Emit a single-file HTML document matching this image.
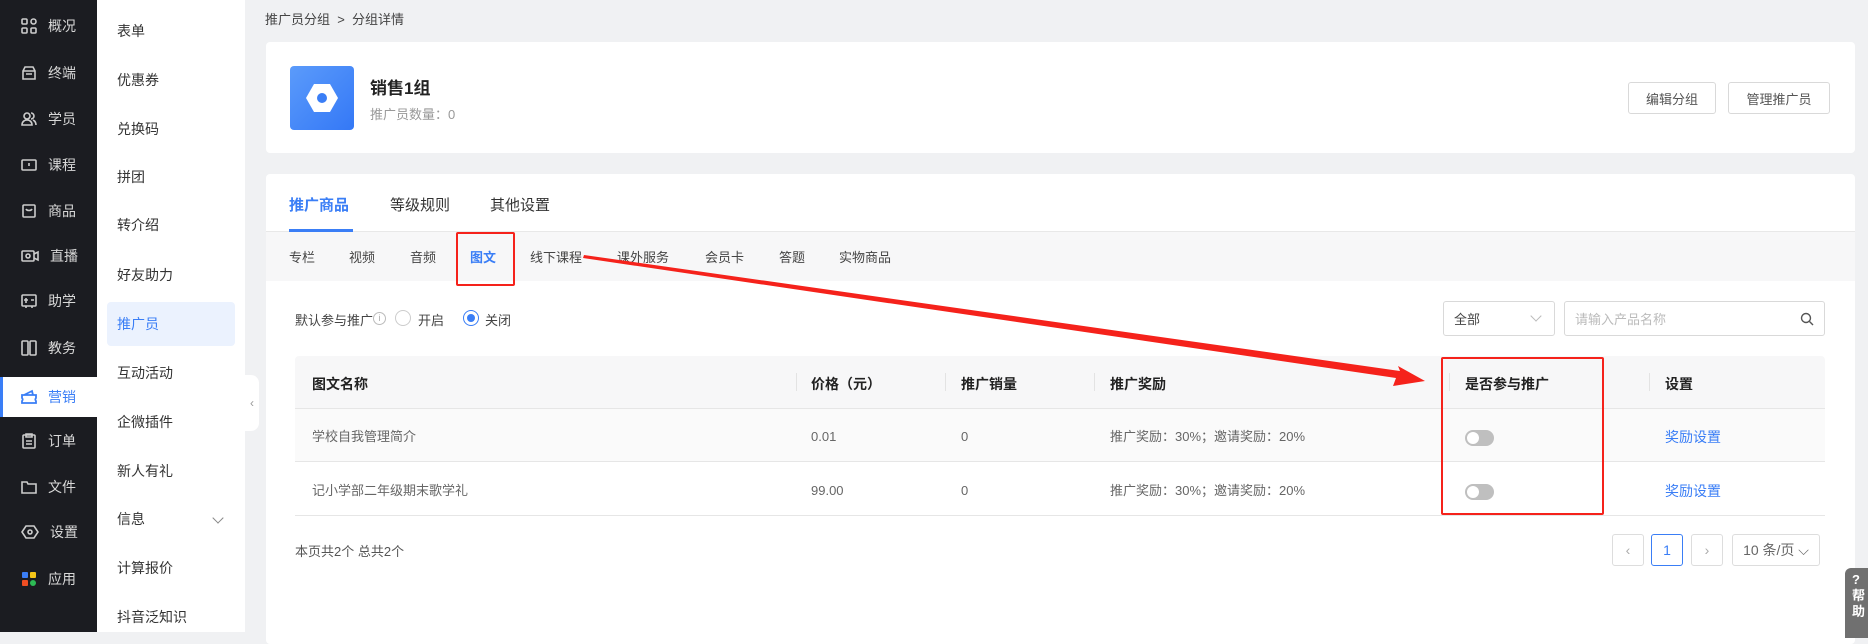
<!DOCTYPE html>
<html><head><meta charset="utf-8"><style>
*{box-sizing:border-box;margin:0;padding:0}
body{width:1868px;height:632px;overflow:hidden;background:#f0f1f3;font-family:"Liberation Sans","Noto Sans CJK SC",sans-serif;font-size:14px;color:#333;position:relative}
.abs{position:absolute}
.side{left:0;top:0;width:97px;height:632px;background:#1b1c21}
.si{position:absolute;left:0;width:97px;height:40px;display:flex;align-items:center;color:#d8d8d8;font-size:14px}
.si svg{margin-left:21px;margin-right:11px}
.sel{background:#fff;color:#3a7ef6}
.menu2{left:97px;top:0;width:148px;height:632px;background:#fff}
.m2{position:absolute;left:20px;font-size:14px;color:#333;line-height:20px}
.card{background:#fff;border-radius:4px}
.btn{position:absolute;border:1px solid #d9d9d9;border-radius:3px;background:#fff;font-size:13px;color:#555;display:flex;align-items:center;justify-content:center}
.th{position:absolute;font-weight:bold;color:#222;font-size:14px}
.td{position:absolute;color:#666;font-size:13px;line-height:20px;height:20px;display:flex;align-items:center}
.sep{position:absolute;width:1px;height:18px;background:#e3e3e3;top:373px}
.tog{position:absolute;width:29px;height:16px;border-radius:8px;background:#bfbfbf}
.tog:after{content:"";position:absolute;left:2px;top:2px;width:12px;height:12px;border-radius:50%;background:#fff}
.link{position:absolute;color:#3a7ef6;font-size:14px}
.pg{position:absolute;top:534px;height:32px;border:1px solid #ddd;border-radius:3px;display:flex;align-items:center;justify-content:center;color:#aaa;font-size:14px;background:#fff}
</style></head><body>
<div class="abs side"></div>
<div class="si" style="top:6px"><svg width="16" height="16" viewBox="0 0 16 16" fill="none" stroke="#ccc" stroke-width="1.6"><rect x="1" y="1" width="5" height="5" rx="1"/><rect x="10" y="1" width="5" height="5" rx="2.5"/><rect x="1" y="10" width="5" height="5" rx="1"/><rect x="10" y="10" width="5" height="5" rx="1"/></svg>概况</div>
<div class="si" style="top:53px"><svg width="16" height="16" viewBox="0 0 16 16" fill="none" stroke="#ccc" stroke-width="1.6"><path d="M2 6l2-4h8l2 4v8H2z M2 6h12 M5 9h6"/></svg>终端</div>
<div class="si" style="top:99px"><svg width="16" height="16" viewBox="0 0 16 16" fill="none" stroke="#ccc" stroke-width="1.6"><circle cx="6" cy="5" r="3"/><path d="M1 14c0-3 2-5 5-5s5 2 5 5z M10 2a3 3 0 010 6 M12 9c2 1 3 3 3 5"/></svg>学员</div>
<div class="si" style="top:145px"><svg width="16" height="16" viewBox="0 0 16 16" fill="none" stroke="#ccc" stroke-width="1.6"><rect x="1" y="3" width="14" height="10" rx="1"/><path d="M8 6v3"/></svg>课程</div>
<div class="si" style="top:191px"><svg width="16" height="16" viewBox="0 0 16 16" fill="none" stroke="#ccc" stroke-width="1.6"><rect x="2" y="2" width="12" height="12" rx="1"/><path d="M5 6c1 2 5 2 6 0"/></svg>商品</div>
<div class="si" style="top:236px"><svg width="18" height="16" viewBox="0 0 18 16" fill="none" stroke="#ccc" stroke-width="1.6"><rect x="1" y="3" width="12" height="10" rx="1"/><circle cx="7" cy="8" r="2"/><path d="M13 6l4-2v8l-4-2"/></svg>直播</div>
<div class="si" style="top:281px"><svg width="16" height="16" viewBox="0 0 16 16" fill="none" stroke="#ccc" stroke-width="1.6"><rect x="1" y="2" width="14" height="11" rx="1"/><path d="M5 5v5 M3 7h4 M10 7h3 M5 13v2 M11 13v2"/></svg>助学</div>
<div class="si" style="top:328px"><svg width="16" height="16" viewBox="0 0 16 16" fill="none" stroke="#ccc" stroke-width="1.6"><rect x="1" y="1" width="6" height="14" rx="1"/><rect x="9" y="1" width="6" height="14" rx="1"/></svg>教务</div>
<div class="si sel" style="top:377px;height:40px;border-left:3px solid #3a7ef6"><svg width="16" height="16" viewBox="0 0 16 16" fill="none" stroke="#3a7ef6" stroke-width="1.8" style="margin-left:18px"><path d="M1 6h14v3a2 2 0 000 3v2H1v-2a2 2 0 000-3z M3 6l8-4 1 4"/></svg>营销</div>
<div class="si" style="top:421px"><svg width="16" height="16" viewBox="0 0 16 16" fill="none" stroke="#ccc" stroke-width="1.6"><rect x="2" y="2" width="12" height="13" rx="1"/><path d="M5 1h6v3H5z M5 8h6 M5 11h6"/></svg>订单</div>
<div class="si" style="top:467px"><svg width="16" height="16" viewBox="0 0 16 16" fill="none" stroke="#ccc" stroke-width="1.6"><path d="M1 3h5l1 2h8v9H1z"/></svg>文件</div>
<div class="si" style="top:512px"><svg width="18" height="16" viewBox="0 0 18 16" fill="none" stroke="#ccc" stroke-width="1.6"><path d="M1 8l4-6h8l4 6-4 6H5z"/><circle cx="9" cy="8" r="2"/></svg>设置</div>
<div class="si" style="top:559px"><svg width="16" height="16" viewBox="0 0 16 16"><rect x="1" y="1" width="6" height="6" rx="1" fill="#3a7ef6"/><rect x="9" y="1" width="6" height="6" rx="1" fill="#f5c518"/><rect x="1" y="9" width="6" height="6" rx="1" fill="#f04e23"/><rect x="9" y="9" width="6" height="6" rx="3" fill="#2dbb55"/></svg>应用</div>

<div class="abs menu2"></div>
<div class="abs" style="left:107px;top:302px;width:128px;height:44px;background:#ebf2fe;border-radius:4px"></div>
<div class="m2" style="left:117px;top:21px">表单</div>
<div class="m2" style="left:117px;top:70px">优惠券</div>
<div class="m2" style="left:117px;top:119px">兑换码</div>
<div class="m2" style="left:117px;top:167px">拼团</div>
<div class="m2" style="left:117px;top:215px">转介绍</div>
<div class="m2" style="left:117px;top:265px">好友助力</div>
<div class="m2" style="left:117px;top:314px;color:#3a7ef6">推广员</div>
<div class="m2" style="left:117px;top:363px">互动活动</div>
<div class="m2" style="left:117px;top:412px">企微插件</div>
<div class="m2" style="left:117px;top:461px">新人有礼</div>
<div class="m2" style="left:117px;top:509px">信息</div>
<div class="abs" style="left:214px;top:514px;width:8px;height:8px;border-right:1px solid #888;border-bottom:1px solid #888;transform:rotate(45deg)"></div>
<div class="m2" style="left:117px;top:558px">计算报价</div>
<div class="m2" style="left:117px;top:607px">抖音泛知识</div>
<div class="abs" style="left:245px;top:375px;width:14px;height:56px;background:#fff;border-radius:0 8px 8px 0;color:#999;font-size:12px;display:flex;align-items:center;justify-content:center">‹</div>

<div class="abs" style="left:265px;top:9px;font-size:13px;color:#444">推广员分组 &nbsp;&gt;&nbsp; 分组详情</div>

<div class="abs card" style="left:266px;top:42px;width:1589px;height:111px"></div>
<div class="abs" style="left:290px;top:66px;width:64px;height:64px;border-radius:4px;background:linear-gradient(135deg,#5b9bfb,#3478f6)">
<svg width="64" height="64" viewBox="0 0 64 64"><path d="M24 18h16l8 14-8 14H24l-8-14z" fill="#fff"/><circle cx="32" cy="32" r="5" fill="#3a7ef6"/></svg></div>
<div class="abs" style="left:370px;top:74px;font-size:17px;font-weight:bold;color:#222">销售1组</div>
<div class="abs" style="left:370px;top:104px;font-size:13px;color:#999">推广员数量：0</div>
<div class="btn" style="left:1628px;top:82px;width:88px;height:32px">编辑分组</div>
<div class="btn" style="left:1728px;top:82px;width:102px;height:32px">管理推广员</div>

<div class="abs card" style="left:266px;top:174px;width:1589px;height:470px"></div>
<div class="abs" style="left:289px;top:194px;font-size:15px;color:#3a7ef6;font-weight:bold">推广商品</div>
<div class="abs" style="left:390px;top:194px;font-size:15px;color:#333">等级规则</div>
<div class="abs" style="left:490px;top:194px;font-size:15px;color:#333">其他设置</div>
<div class="abs" style="left:266px;top:231px;width:1589px;height:50px;background:#f7f7f8;border-top:1px solid #e8e8e8"></div>
<div class="abs" style="left:289px;top:229px;width:64px;height:3px;background:#3a7ef6"></div>
<div class="abs" style="left:289px;top:247px;font-size:13px;color:#444">专栏</div>
<div class="abs" style="left:349px;top:247px;font-size:13px;color:#444">视频</div>
<div class="abs" style="left:410px;top:247px;font-size:13px;color:#444">音频</div>
<div class="abs" style="left:470px;top:247px;font-size:13px;color:#3a7ef6;font-weight:bold">图文</div>
<div class="abs" style="left:530px;top:247px;font-size:13px;color:#444">线下课程</div>
<div class="abs" style="left:617px;top:247px;font-size:13px;color:#444">课外服务</div>
<div class="abs" style="left:705px;top:247px;font-size:13px;color:#444">会员卡</div>
<div class="abs" style="left:779px;top:247px;font-size:13px;color:#444">答题</div>
<div class="abs" style="left:839px;top:247px;font-size:13px;color:#444">实物商品</div>

<div class="abs" style="left:295px;top:310px;font-size:13px;color:#444">默认参与推广</div>
<div class="abs" style="left:373px;top:312px;width:13px;height:13px;border:1px solid #bbb;border-radius:50%;font-size:9px;color:#aaa;text-align:center;line-height:11px">i</div>
<div class="abs" style="left:395px;top:310px;width:16px;height:16px;border:1px solid #ccc;border-radius:50%"></div>
<div class="abs" style="left:418px;top:310px;font-size:13px;color:#444">开启</div>
<div class="abs" style="left:463px;top:310px;width:16px;height:16px;border:1px solid #3a7ef6;border-radius:50%"><div style="margin:3px;width:8px;height:8px;border-radius:50%;background:#3a7ef6"></div></div>
<div class="abs" style="left:485px;top:310px;font-size:13px;color:#444">关闭</div>

<div class="btn" style="left:1443px;top:301px;width:112px;height:35px;justify-content:flex-start;padding-left:10px;color:#444">全部<span style="position:absolute;right:14px;top:10px;width:8px;height:8px;border-right:1px solid #bbb;border-bottom:1px solid #bbb;transform:rotate(45deg)"></span></div>
<div class="btn" style="left:1564px;top:301px;width:261px;height:35px;justify-content:flex-start;padding-left:10px;color:#bbb">请输入产品名称
<svg class="abs" style="right:10px;top:10px" width="14" height="14" viewBox="0 0 14 14" fill="none" stroke="#555" stroke-width="1.4"><circle cx="6" cy="6" r="4.5"/><path d="M9.5 9.5L13 13"/></svg></div>

<div class="abs" style="left:295px;top:356px;width:1530px;height:53px;background:#f7f7f8;border-radius:4px 4px 0 0;border-bottom:1px solid #e6e6e6"></div>
<div class="abs" style="left:295px;top:409px;width:1530px;height:53px;background:#fafafa;border-bottom:1px solid #e6e6e6"></div>
<div class="abs" style="left:295px;top:462px;width:1530px;height:54px;background:#fff;border-bottom:1px solid #e6e6e6"></div>
<div class="th" style="left:312px;top:374px">图文名称</div>
<div class="sep" style="left:796px"></div><div class="th" style="left:811px;top:374px">价格（元）</div>
<div class="sep" style="left:945px"></div><div class="th" style="left:961px;top:374px">推广销量</div>
<div class="sep" style="left:1094px"></div><div class="th" style="left:1110px;top:374px">推广奖励</div>
<div class="sep" style="left:1449px"></div><div class="th" style="left:1465px;top:374px">是否参与推广</div>
<div class="sep" style="left:1649px"></div><div class="th" style="left:1665px;top:374px">设置</div>
<div class="td" style="left:312px;top:427px">学校自我管理简介</div>
<div class="td" style="left:811px;top:427px">0.01</div>
<div class="td" style="left:961px;top:427px">0</div>
<div class="td" style="left:1110px;top:427px">推广奖励：30%；邀请奖励：20%</div>
<div class="tog" style="left:1465px;top:430px"></div>
<div class="link" style="left:1665px;top:427px">奖励设置</div>
<div class="td" style="left:312px;top:481px">记小学部二年级期末歌学礼</div>
<div class="td" style="left:811px;top:481px">99.00</div>
<div class="td" style="left:961px;top:481px">0</div>
<div class="td" style="left:1110px;top:481px">推广奖励：30%；邀请奖励：20%</div>
<div class="tog" style="left:1465px;top:484px"></div>
<div class="link" style="left:1665px;top:481px">奖励设置</div>

<div class="abs" style="left:295px;top:541px;font-size:13px;color:#555">本页共2个 总共2个</div>
<div class="pg" style="left:1612px;width:32px">‹</div>
<div class="pg" style="left:1651px;width:32px;border-color:#3a7ef6;color:#3a7ef6">1</div>
<div class="pg" style="left:1691px;width:32px">›</div>
<div class="pg" style="left:1732px;width:88px;color:#666">10 条/页 ⌵</div>

<div class="abs" style="left:1845px;top:568px;width:30px;height:70px;background:#707070;border-radius:6px 0 0 0;color:#fff;font-size:13px;font-weight:bold;padding:4px 0 0 7px;line-height:16px">?<br>帮<br>助</div>

<div class="abs" style="left:456px;top:232px;width:59px;height:54px;border:2px solid #f5221b;border-radius:2px"></div>
<div class="abs" style="left:1441px;top:357px;width:163px;height:158px;border:2px solid #f5221b;border-radius:2px"></div>
<svg class="abs" style="left:0;top:0" width="1868" height="632"><polygon points="584,255 1400,371 1398,366 1425,381 1393,386 1396,378 583,258" fill="#f5221b"/></svg>
</body></html>
